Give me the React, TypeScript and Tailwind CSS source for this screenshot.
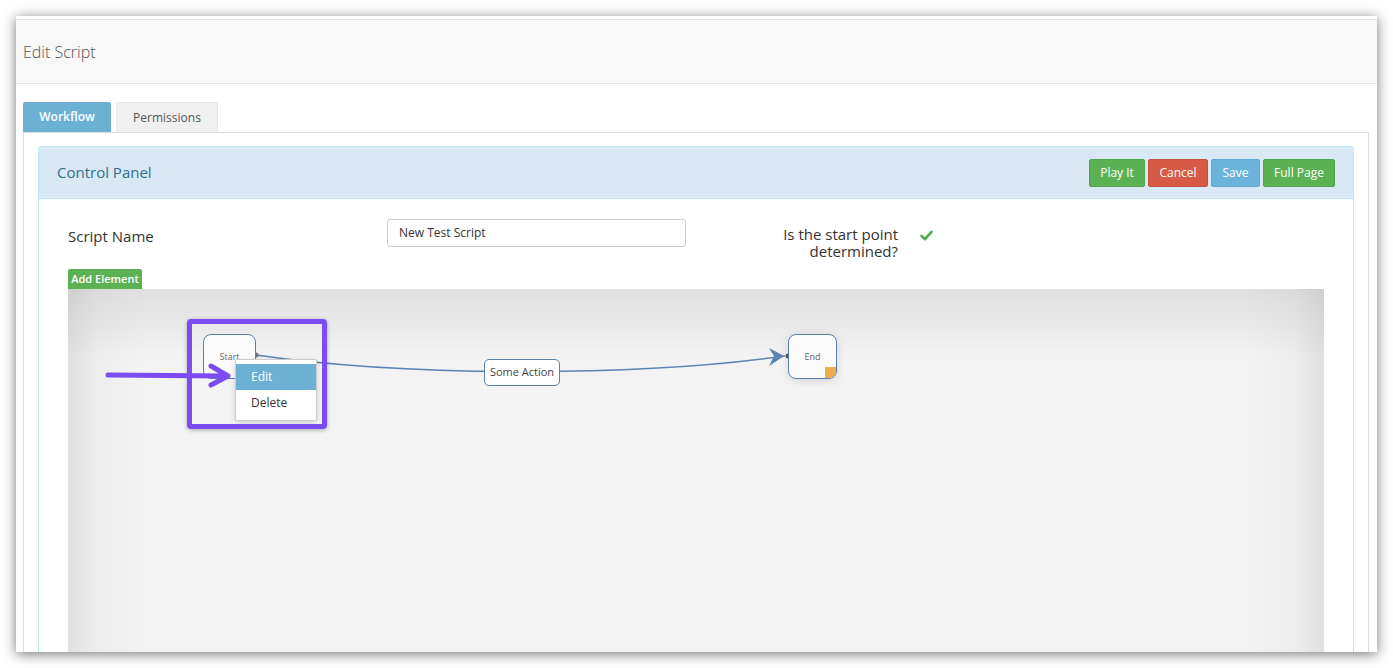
import { useState } from "react";

const font = { fontFamily: '"Open Sans", "Liberation Sans", sans-serif' };

// Workflow canvas: nodes, connector and the highlighted context menu
function WorkflowCanvas() {
    return (
        <div className="relative w-[1256px] h-[560px] bg-[linear-gradient(to_right,rgba(0,0,0,0.08),rgba(0,0,0,0.025)_30px,rgba(0,0,0,0)_80px,rgba(0,0,0,0)_1176px,rgba(0,0,0,0.025)_1226px,rgba(0,0,0,0.08)),linear-gradient(to_bottom,#e0e0e0,#f3f3f3_70px)]">
            <svg className="absolute inset-0" width="1256" height="560">
                <path d="M188,66 C340,88 570,88 717,67" fill="none" stroke="#5b83b3" strokeWidth="1.5" />
                <polygon points="716,67 701,59 706,67 701,77" fill="#5b83b3" />
                <circle cx="188" cy="66" r="2.5" fill="#777" />
                <circle cx="720" cy="67" r="2.5" fill="#555" />
            </svg>

            {/* Start node */}
            <div className="absolute left-[135px] top-[45px] w-[53px] h-[45px] bg-[#fbfbfb] border border-[#5b7fa8] rounded-[8px] flex items-center justify-center text-[9px] text-[#666]">
                Start
            </div>

            {/* Action label */}
            <div className="absolute left-[416px] top-[70px] w-[76px] h-[27px] bg-white border border-[#5b7fa8] rounded-[5px] flex items-center justify-center text-[11px] text-[#444]">
                Some Action
            </div>

            {/* End node */}
            <div className="absolute left-[720px] top-[45px] w-[49px] h-[45px] bg-[#fbfbfb] border border-[#5b7fa8] rounded-[8px] shadow-[0_2px_10px_rgba(0,0,0,0.12)] flex items-center justify-center text-[9px] text-[#666] overflow-hidden">
                End
                <span className="absolute right-0 bottom-0 w-[11px] h-[11px] bg-[#f0ad4e]" />
            </div>

            {/* Context menu */}
            <div className="absolute left-[167px] top-[70px] w-[82px] py-[4px] bg-white border border-[#ccc] rounded-[2px] shadow-[0_2px_6px_rgba(0,0,0,0.15)] text-[12px]">
                <div className="h-[26px] pl-[15px] flex items-center bg-[#6cb0d3] text-white">Edit</div>
                <div className="h-[26px] pl-[15px] flex items-center text-[#333]">Delete</div>
            </div>

            {/* Highlight box and arrow */}
            <div className="absolute left-[119px] top-[30px] w-[140px] h-[110px] border-[5px] border-[#7a4cf2] rounded-[4px] shadow-[0_1px_4px_rgba(0,0,0,0.3)]" />
            <svg className="absolute left-0 top-0" width="260" height="140">
                <path d="M40,86 L158,87" stroke="#7a4cf2" strokeWidth="5" strokeLinecap="round" />
                <path d="M143,77 L160,87 L143,96" fill="none" stroke="#7a4cf2" strokeWidth="5" strokeLinecap="round" strokeLinejoin="round" />
            </svg>
        </div>
    );
}

export default function App() {
    const [scriptName] = useState("New Test Script");

    return (
        <div className="w-[1393px] h-[668px] bg-white pt-4 pl-4 overflow-hidden" style={font}>
            <div className="w-[1361px] h-[636px] bg-white overflow-hidden pt-[3px] shadow-[0_2px_12px_rgba(0,0,0,0.55)]">
                {/* Page header */}
                <div className="h-[65px] bg-[#f8f8f8] border-t border-b border-[#e5e5e5] flex items-center pl-[7px]">
                    <h1 className="text-[16px] font-light text-[#555]">Edit Script</h1>
                </div>

                {/* Tabs */}
                <div className="mt-[18px] ml-[7px] flex gap-[5px]">
                    <div className="w-[88px] h-[30px] bg-[#6cb0d3] text-white text-[12px] font-semibold flex items-center justify-center rounded-t-[2px]">
                        Workflow
                    </div>
                    <div className="w-[102px] h-[30px] bg-[#f0f0f0] border border-b-0 border-[#e6e6e6] text-[#555] text-[12px] flex items-center justify-center rounded-t-[2px]">
                        Permissions
                    </div>
                </div>

                <div className="ml-[7px] w-[1346px] h-[600px] border border-[#ddd] pt-[13px] pl-[14px]">
                    {/* Control panel */}
                    <div className="w-[1316px] h-[600px] border border-[#bce8f1] rounded-t-[3px]">
                        <div className="h-[52px] bg-[#d9e8f4] border-b border-[#bce8f1] flex items-center justify-between px-[18px]">
                            <span className="text-[15px] text-[#31708f]">Control Panel</span>
                            <div className="flex gap-[3px] text-[12px] text-white">
                                <button className="w-[56px] h-[28px] bg-[#5cb155] border border-[#4fa54a] rounded-[2px]">Play It</button>
                                <button className="w-[60px] h-[28px] bg-[#d65a45] border border-[#c9503c] rounded-[2px]">Cancel</button>
                                <button className="w-[49px] h-[28px] bg-[#6cb3dc] border border-[#5faad4] rounded-[2px]">Save</button>
                                <button className="w-[72px] h-[28px] bg-[#5cb155] border border-[#4fa54a] rounded-[2px]">Full Page</button>
                            </div>
                        </div>

                        <div className="px-[29px] pt-[20px]">
                            <div className="flex items-start">
                                <label className="w-[319px] pt-[6px] text-[15px] text-[#333]">Script Name</label>
                                <div className="w-[299px] h-[28px] border border-[#ccc] rounded-[3px] px-[11px] flex items-center text-[12px] text-[#333]">
                                    {scriptName}
                                </div>
                                <div className="ml-[12px] w-[200px] pt-[7px] flex flex-col items-end text-[15px] leading-[17px] text-[#333]">
                                    <span>Is the start point</span>
                                    <span>determined?</span>
                                </div>
                                <svg className="ml-[22px] mt-[11px]" width="13" height="11" viewBox="0 0 13 11">
                                    <path d="M1.5,6 L5,9.2 L11.5,1.8" fill="none" stroke="#4cae4c" strokeWidth="2.6" strokeLinecap="round" strokeLinejoin="round" />
                                </svg>
                            </div>

                            <button className="mt-[9px] w-[74px] h-[20px] bg-[#5cb155] text-white text-[11px] font-semibold rounded-t-[2px] flex items-center justify-center">
                                Add Element
                            </button>
                            <WorkflowCanvas />
                        </div>
                    </div>
                </div>
            </div>
        </div>
    );
}
